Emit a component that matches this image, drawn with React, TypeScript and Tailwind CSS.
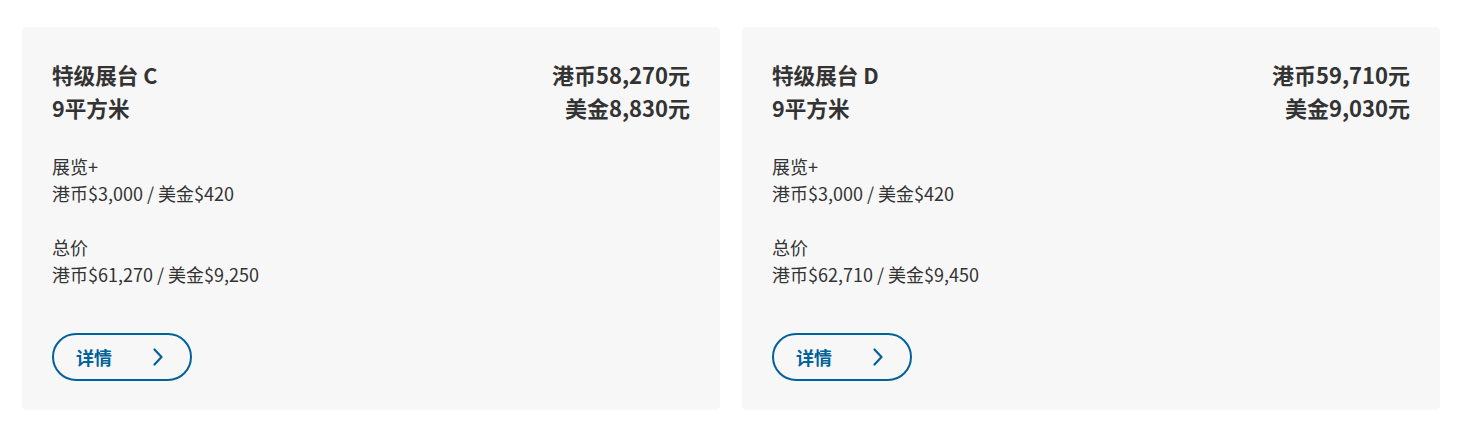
import React from "react";

type Card = {
  title: string;
  hkd: string;
  usd: string;
  total: string;
};

const cards: Card[] = [
  { title: "特级展台 C", hkd: "港币58,270元", usd: "美金8,830元", total: "港币$61,270 / 美金$9,250" },
  { title: "特级展台 D", hkd: "港币59,710元", usd: "美金9,030元", total: "港币$62,710 / 美金$9,450" },
];

function Chevron() {
  return (
    <svg width="12" height="18" viewBox="0 0 12 18" fill="none">
      <path d="M2.5 1.5 L9.5 9 L2.5 16.5" stroke="#00629b" strokeWidth="2.2" strokeLinecap="round" strokeLinejoin="round" />
    </svg>
  );
}

export default function App() {
  return (
    <div
      className="w-[1459px] h-[424px] bg-white pt-[27px] pl-[22px] pr-[19px] text-[#333333]"
      style={{ fontFamily: '"Noto Sans CJK SC", "Noto Sans", sans-serif' }}
    >
      <div className="grid grid-cols-2 gap-[22px]">
        {cards.map((c) => (
          <div key={c.title} className="h-[383px] bg-[#f7f7f7] rounded-[5px] pt-[31px] px-[30px] flex flex-col">
            <div className="flex justify-between font-bold leading-[33px]">
              <div className="text-[21.6px]">
                <div>{c.title}</div>
                <div>9平方米</div>
              </div>
              <div className="text-right text-[22px]">
                <div>{c.hkd}</div>
                <div>{c.usd}</div>
              </div>
            </div>
            <div className="mt-[29px] text-[18px] leading-[27px]">
              <div>展览+</div>
              <div>港币$3,000 / 美金$420</div>
              <div className="mt-[27px]">总价</div>
              <div>{c.total}</div>
            </div>
            <div className="mt-[45px]">
              <button className="w-[140px] h-[48px] rounded-full border-2 border-[#00629b] flex items-center justify-between pl-[22px] pr-[26px] text-[#00629b] font-bold text-[18px]">
                <span>详情</span>
                <Chevron />
              </button>
            </div>
          </div>
        ))}
      </div>
    </div>
  );
}
